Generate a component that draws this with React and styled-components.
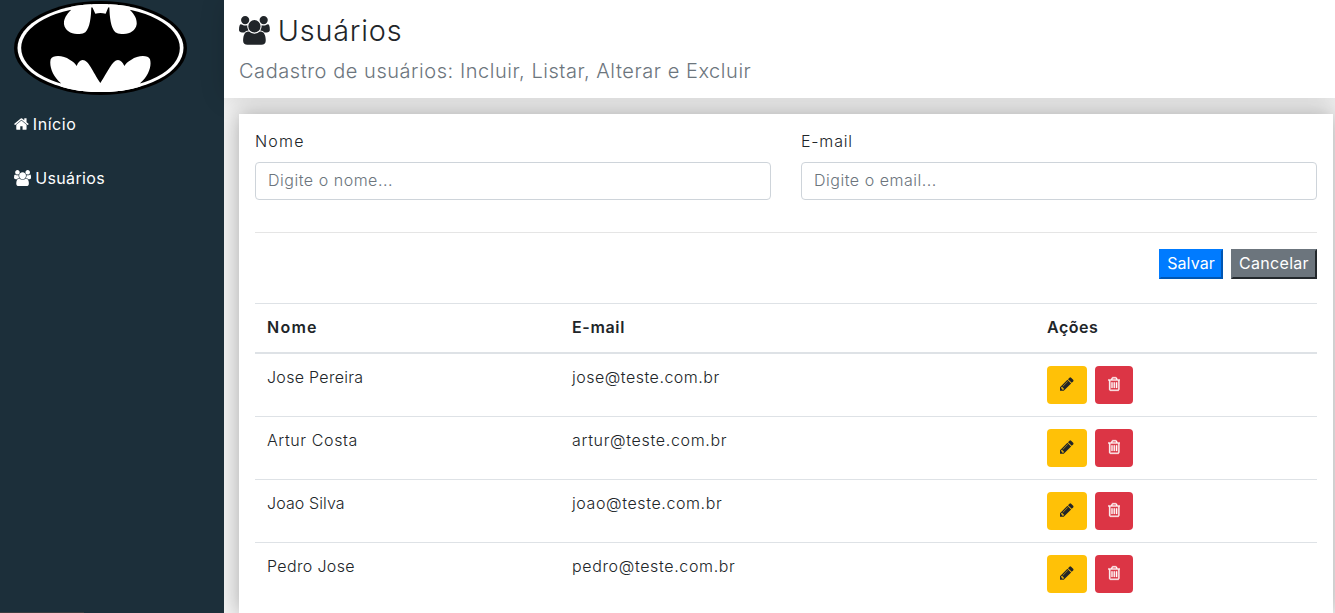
import React from "react";
import styled, { createGlobalStyle } from "styled-components";

const GlobalStyle = createGlobalStyle`
  * { box-sizing: border-box; }
  body {
    margin: 0;
    font-family: Inter, "Liberation Sans", sans-serif;
    font-size: 16px;
    font-weight: 300;
    line-height: 24px;
    color: #212529;
  }
`;

const Page = styled.div`
  display: grid;
  grid-template-columns: 224px 1fr;
  height: 613px;
  overflow: hidden;
`;

const Sidebar = styled.aside`
  display: flex;
  flex-direction: column;
  background: #1c2f3a;
  color: #fff;
`;

const Logo = styled.svg`
  display: block;
  width: 174px;
  height: 95px;
  margin: 1px 0 1px 14px;
`;

const Menu = styled.nav`
  flex: 1;
`;

const MenuLink = styled.a`
  display: flex;
  align-items: center;
  gap: 4px;
  height: 54px;
  padding-left: 14px;
  color: #fff;
  font-weight: 400;
  letter-spacing: ${(p) => p.$track}px;
`;

const StatusEdge = styled.div`
  width: 84px;
  height: 1px;
  background: #3b3d40;
`;

const Content = styled.div`
  display: flex;
  flex-direction: column;
  min-width: 0;
  background: #f2f2f2;
`;

const Header = styled.header`
  height: 98px;
  flex: none;
  padding: 13px 15px 0;
  background: #fff;
  box-shadow: 0 0 24px rgba(0, 0, 0, 0.13);
`;

const Title = styled.h1`
  display: flex;
  align-items: center;
  gap: 8px;
  height: 35px;
  margin: 0;
  font-size: 28.8px;
  font-weight: 300;
  letter-spacing: 0.8px;
`;

const Subtitle = styled.p`
  margin: 8px 0 0;
  line-height: 30px;
  font-size: 20px;
  color: #6c757d;
  letter-spacing: 0.55px;
  white-space: nowrap;
`;

const Card = styled.main`
  flex: 1;
  margin: 16px 2px 0 15px;
  padding: 15px 16px 0;
  background: #fff;
  box-shadow: 0 0 20px rgba(0, 0, 0, 0.3);
  clip-path: inset(-16px -2px 0 -15px);
`;

const FormRow = styled.div`
  display: grid;
  grid-template-columns: 1fr 1fr;
  gap: 30px;
`;

const Field = styled.label`
  display: flex;
  flex-direction: column;
  gap: 9px;
  letter-spacing: ${(p) => p.$track}px;
`;

const Input = styled.input`
  height: 38px;
  padding: 0 12px 2px;
  border: 1px solid #ced4da;
  border-radius: 4px;
  background: #fff;
  font: inherit;
  letter-spacing: 0.52px;
  &::placeholder { color: #6c757d; opacity: 1; }
`;

const Divider = styled.hr`
  height: 1px;
  margin: 32px 0 16px;
  border: 0;
  background: #e5e5e5;
`;

const FormActions = styled.div`
  display: flex;
  justify-content: flex-end;
  gap: 8px;
  margin-bottom: 24px;
`;

const FormButton = styled.button`
  width: ${(p) => p.$width}px;
  height: 30px;
  padding: 0 0 2px;
  border: 2px solid;
  border-color: ${(p) => `${p.$color} ${p.$edge} ${p.$edge} ${p.$color}`};
  background: ${(p) => p.$color};
  color: #fff;
  font: 400 16px/24px Inter, sans-serif;
  letter-spacing: ${(p) => p.$track}px;
`;

const Table = styled.section``;

const TableRow = styled.div`
  display: grid;
  grid-template-columns: 305px 475px 1fr;
  height: 63px;
  padding: 11px 0 12px;
  border-top: 1px solid #dee2e6;
`;

const TableHead = styled(TableRow).attrs({ as: "header" })`
  height: 50px;
  padding-bottom: 10px;
  border-bottom: 1px solid #dee2e6;
  font-weight: 600;
`;

const Cell = styled.div`
  padding-left: 12px;
  letter-spacing: ${(p) => p.$track ?? 0}px;
`;

const RowActions = styled(Cell)`
  display: flex;
  gap: 8px;
  padding-top: 1px;
`;

const IconButton = styled.button`
  display: flex;
  align-items: center;
  justify-content: center;
  width: ${(p) => (p.$danger ? 38 : 40)}px;
  height: 38px;
  padding: 0 0 2px;
  border: 0;
  border-radius: 4px;
  background: ${(p) => (p.$danger ? "#dc3545" : "#ffc107")};
  color: ${(p) => (p.$danger ? "#fff" : "#212529")};
`;

const Glyph = styled.svg`
  flex: none;
  fill: currentColor;
  stroke: currentColor;
  stroke-width: ${(p) => p.$weight};
`;

const icons = {
  home: {
    box: [64, 0, 1664, 1792],
    d: "M1472 992v480q0 26-19 45t-45 19h-384v-384h-256v384h-384q-26 0-45-19t-19-45v-480q0-1 .5-3t.5-3l575-474 575 474q1 2 1 6zm223-69l-62 74q-8 9-21 11h-3q-13 0-21-7l-692-577-692 577q-12 8-24 7-13-2-21-11l-62-74q-8-10-7-23.5t11-21.5l719-599q32-26 76-26t76 26l244 204v-195q0-14 9-23t23-9h192q14 0 23 9t9 23v408l219 182q10 8 11 21.5t-7 23.5z",
  },
  users: {
    box: [0, 0, 1920, 1792],
    d: "M593 896q-162 5-265 128h-134q-82 0-138-40.5t-56-118.5q0-353 124-353 6 0 43.5 21t97.5 42.5 119 21.5q67 0 133-23-5 37-5 66 0 139 81 256zm1071 637q0 120-73 189.5t-194 69.5h-874q-121 0-194-69.5t-73-189.5q0-53 3.5-103.5t14-109 26.5-108.5 43-97.5 62-81 85.5-53.5 111.5-20q10 0 43 21.5t73 48 107 48 135 21.5 135-21.5 107-48 73-48 43-21.5q61 0 111.5 20t85.5 53.5 62 81 43 97.5 26.5 108.5 14 109 3.5 103.5zm-1024-1277q0 106-75 181t-181 75-181-75-75-181 75-181 181-75 181 75 75 181zm704 384q0 159-112.5 271.5t-271.5 112.5-271.5-112.5-112.5-271.5 112.5-271.5 271.5-112.5 271.5 112.5 112.5 271.5zm576 225q0 78-56 118.5t-138 40.5h-134q-103-123-265-128 81-117 81-256 0-29-5-66 66 23 133 23 59 0 119-21.5t97.5-42.5 43.5-21q124 0 124 353zm-128-609q0 106-75 181t-181 75-181-75-75-181 75-181 181-75 181 75 75 181z",
  },
  pencil: {
    box: [128, 0, 1536, 1792],
    d: "M491 1536l91-91-235-235-91 91v107h128v128h107zm523-928q0-22-22-22-10 0-17 7l-542 542q-7 7-7 17 0 22 22 22 10 0 17-7l542-542q7-7 7-17zm-54-192l416 416-832 832h-416v-416zm683 96q0 53-37 90l-166 166-416-416 166-165q36-38 90-38 53 0 91 38l235 234q37 39 37 91z",
  },
  trash: {
    box: [192, 0, 1408, 1792],
    weight: 36,
    d: "M704 736v576q0 14-9 23t-23 9h-64q-14 0-23-9t-9-23v-576q0-14 9-23t23-9h64q14 0 23 9t9 23zm256 0v576q0 14-9 23t-23 9h-64q-14 0-23-9t-9-23v-576q0-14 9-23t23-9h64q14 0 23 9t9 23zm256 0v576q0 14-9 23t-23 9h-64q-14 0-23-9t-9-23v-576q0-14 9-23t23-9h64q14 0 23 9t9 23zm128 724v-948h-896v948q0 22 7 40.5t14.5 27 10.5 8.5h832q3 0 10.5-8.5t14.5-27 7-40.5zm-672-1076h448l-48-117q-7-9-17-11h-317q-10 2-17 11zm928 32v64q0 14-9 23t-23 9h-96v948q0 83-47 143.5t-113 60.5h-832q-66 0-113-58.5t-47-141.5v-952h-96q-14 0-23-9t-9-23v-64q0-14 9-23t23-9h309l70-167q15-37 54-63t79-26h320q40 0 79 26t54 63l70 167h309q14 0 23 9t9 23z",
  },
};

function Icon({ name, size = 16 }) {
  const { box, d, weight = 0 } = icons[name];
  return (
    <Glyph $weight={weight} viewBox={box.join(" ")} width={(box[2] / 1792) * size} height={size} aria-hidden="true">
      <path d={d} />
    </Glyph>
  );
}

function BatLogo() {
  return (
    <Logo viewBox="42 3 522 285" aria-label="Logo">
      <defs>
        <clipPath id="oval"><ellipse cx="301.5" cy="144" rx="249" ry="132" /></clipPath>
      </defs>
      <ellipse cx="301.5" cy="144" rx="259.5" ry="141" fill="#000" />
      <ellipse cx="301.5" cy="144" rx="249" ry="132" fill="#fff" />
      <ellipse cx="301.5" cy="144" rx="238" ry="123" fill="#000" />
      <g fill="#fff" clipPath="url(#oval)">
        <path d="M213 30C197 46 191 58 192 73C195 92 213 103 234 102Q249 103 256 97C270 83 273 52 274 21V8H213Z" />
        <path d="M390 30C406 46 411 58 410 73C407 92 390 103 368 102Q354 103 346 97C332 83 329 52 328 21V8H390Z" />
        <path d="M277 22L286 41Q301 37 317 41L325 22V8H277Z" />
        <path d="M182 249C158 229 147 199 152 178C159 164 190 166 209 179Q225 188 230 198Q236 181 248 180C266 180 278 215 301 249C324 215 337 180 354 180Q366 181 373 198Q378 188 394 179C413 166 444 164 450 178C456 199 445 229 421 249L421 290H182Z" />
      </g>
    </Logo>
  );
}

const users = [
  { name: "Jose Pereira", email: "jose@teste.com.br", track: [0.3, 0.5] },
  { name: "Artur Costa", email: "artur@teste.com.br", track: [0.6, 0.67] },
  { name: "Joao Silva", email: "joao@teste.com.br", track: [0.1, 0.6] },
  { name: "Pedro Jose", email: "pedro@teste.com.br", track: [0.35, 0.64] },
];

export default function App() {
  return (
    <>
      <GlobalStyle />
      <Page>
        <Sidebar>
          <BatLogo />
          <Menu>
            <MenuLink $track={0.55}><Icon name="home" />Início</MenuLink>
            <MenuLink $track={0.38}><Icon name="users" />Usuários</MenuLink>
          </Menu>
          <StatusEdge />
        </Sidebar>
        <Content>
          <Header>
            <Title><Icon name="users" size={28.8} />Usuários</Title>
            <Subtitle>Cadastro de usuários: Incluir, Listar, Alterar e Excluir</Subtitle>
          </Header>
          <Card>
            <FormRow>
              <Field $track={1.2}>Nome<Input placeholder="Digite o nome..." /></Field>
              <Field $track={0.8}>E-mail<Input placeholder="Digite o email..." /></Field>
            </FormRow>
            <Divider />
            <FormActions>
              <FormButton $width={64} $color="#007bff" $edge="#0056b3" $track={0.1}>Salvar</FormButton>
              <FormButton $width={86} $color="#6c757d" $edge="#23282c" $track={0.3}>Cancelar</FormButton>
            </FormActions>
            <Table>
              <TableHead>
                <Cell $track={1.25}>Nome</Cell>
                <Cell $track={0.65}>E-mail</Cell>
                <Cell $track={0.5}>Ações</Cell>
              </TableHead>
              {users.map((user) => (
                <TableRow key={user.email}>
                  <Cell $track={user.track[0]}>{user.name}</Cell>
                  <Cell $track={user.track[1]}>{user.email}</Cell>
                  <RowActions>
                    <IconButton aria-label="Alterar"><Icon name="pencil" /></IconButton>
                    <IconButton $danger aria-label="Excluir"><Icon name="trash" /></IconButton>
                  </RowActions>
                </TableRow>
              ))}
            </Table>
          </Card>
        </Content>
      </Page>
    </>
  );
}
